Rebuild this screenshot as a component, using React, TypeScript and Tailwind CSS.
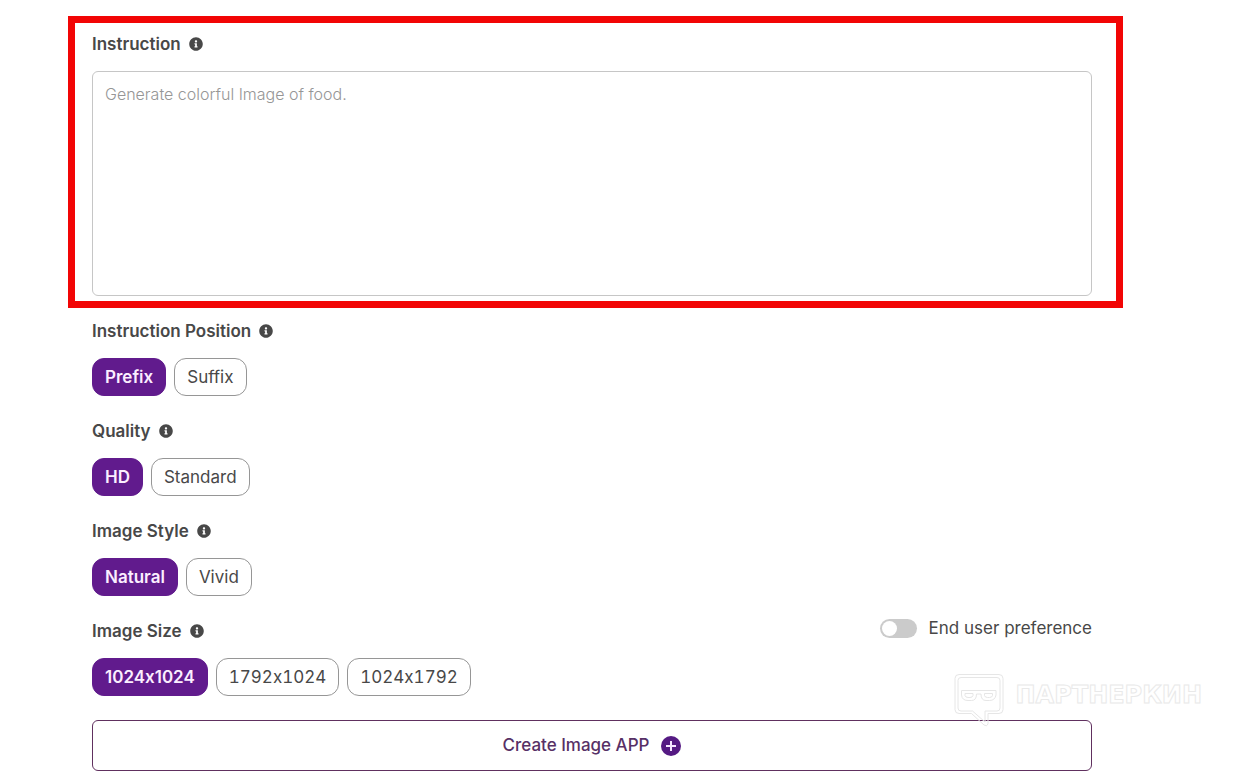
import React, { useId, useState } from "react";
import { FaInfoCircle } from "react-icons/fa";

function LabelText({ children }: { children: React.ReactNode }) {
  return (
    <>
      <span>{children}</span>
      <FaInfoCircle className="size-[14px]" aria-hidden="true" />
    </>
  );
}

function ChoiceGroup({
  label,
  options,
  aside,
}: {
  label: string;
  options: string[];
  aside?: React.ReactNode;
}) {
  const id = useId();
  const [selected, setSelected] = useState(options[0]);
  return (
    <section role="group" aria-labelledby={id}>
      <div className="mb-4 flex h-[22px] items-start justify-between">
        <h2 id={id} className="flex items-center gap-2 font-semibold leading-[22px]">
          <LabelText>{label}</LabelText>
        </h2>
        {aside}
      </div>
      <div className="flex flex-wrap gap-2">
        {options.map((option) => (
          <button
            key={option}
            type="button"
            aria-pressed={option === selected}
            onClick={() => setSelected(option)}
            className={
              option === selected
                ? "rounded-xl border border-[#611b8d] bg-[#611b8d] px-3 py-1.5 font-semibold leading-6 text-[#fbeeff]"
                : "rounded-xl border border-[#969696] bg-white px-3 py-1.5 leading-6 tabular-nums"
            }
          >
            {option}
          </button>
        ))}
      </div>
    </section>
  );
}

function PreferenceSwitch() {
  return (
    <label className="flex h-4 cursor-pointer items-center gap-3 leading-4">
      <input type="checkbox" role="switch" className="peer sr-only" />
      <span className="flex h-[19px] w-[37px] items-center rounded-full bg-[#cbcbcb] px-0.5 peer-checked:justify-end peer-checked:bg-[#611b8d]">
        <span className="size-[15px] rounded-full bg-white" />
      </span>
      <span>End user preference</span>
    </label>
  );
}

function Watermark() {
  return (
    <div className="pointer-events-none absolute right-[51px] bottom-[51px] flex items-start gap-3">
      <svg width="50" height="54" viewBox="0 0 50 54" fill="none" stroke="#e6e6e6" aria-hidden="true">
        <path d="M5 1.5H45Q49 1.5 49 5.5V36.5Q49 40.5 45 40.5H34V51Q33 54 30 52L17.5 40.5H5Q1 40.5 1 36.5V5.5Q1 1.5 5 1.5Z" />
        <path d="M7 4.5H43Q46 4.5 46 7.5V35Q46 38 43 38H31V49L18.5 38H7Q4 38 4 35V7.5Q4 4.5 7 4.5Z" />
        <path d="M7.5 17.5H42V22Q41 27.5 35.5 27.5H32Q27 27.5 27 21H22.5Q22.5 27.5 17.5 27.5H14Q8 27.5 7.5 22Z" />
        <path d="M11 20.5H19V22.5Q18.5 24.5 16 24.5H14Q11.5 24.5 11 22.5ZM30.5 20.5H38.5V22.5Q38 24.5 35.5 24.5H33.5Q31 24.5 30.5 22.5Z" />
      </svg>
      <span className="pt-2.5 font-['DejaVu_Sans',sans-serif] text-2xl leading-6 font-bold text-white [-webkit-text-stroke:1px_#e9e9e9]">
        ПАРТНЕРКИН
      </span>
    </div>
  );
}

export default function App() {
  return (
    <main className="relative bg-white pt-4 pr-[130px] pb-[7px] pl-[68px] font-['Inter',sans-serif] text-[17px] text-[#484848] [font-feature-settings:'calt'_0]">
      <section className="border-[7px] border-[#f20505] pt-2.5 pr-6 pb-[5px] pl-[17px]">
        <label
          htmlFor="instruction"
          className="mb-4 flex items-center gap-2 font-semibold leading-[22px]"
        >
          <LabelText>Instruction</LabelText>
        </label>
        <textarea
          id="instruction"
          placeholder="Generate colorful Image of food."
          className="block h-[225px] w-full resize-none rounded-md border border-[#c6c6c6] px-3 py-2.5 text-base leading-6 font-light placeholder:text-[#969696]"
        />
      </section>

      <div className="mt-3 mr-[31px] ml-6 flex flex-col gap-6">
        <ChoiceGroup label="Instruction Position" options={["Prefix", "Suffix"]} />
        <ChoiceGroup label="Quality" options={["HD", "Standard"]} />
        <ChoiceGroup label="Image Style" options={["Natural", "Vivid"]} />
        <ChoiceGroup
          label="Image Size"
          options={["1024x1024", "1792x1024", "1024x1792"]}
          aside={<PreferenceSwitch />}
        />
        <button
          type="button"
          className="flex h-[51px] w-full items-center justify-center gap-3 rounded-md border border-[#60305f] bg-white font-medium text-[#573066]"
        >
          Create Image APP
          <svg width="20" height="20" viewBox="0 0 20 20" aria-hidden="true">
            <circle cx="10" cy="10" r="10" fill="#551a83" />
            <path d="M10 5V15M5 10H15" stroke="#f5e6ff" strokeWidth="2" />
          </svg>
        </button>
      </div>
      <Watermark />
    </main>
  );
}
